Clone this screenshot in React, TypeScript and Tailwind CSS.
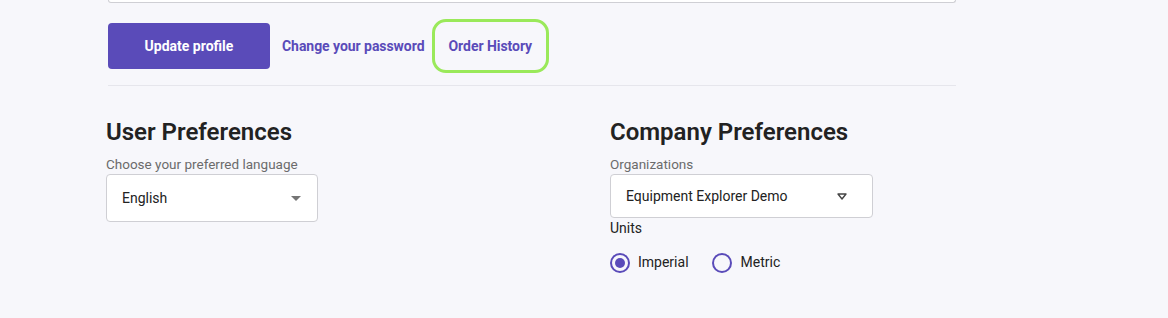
export default function App() {
  return (
    <div className="min-h-[318px] w-[1168px] bg-[#f7f7fb] font-['Roboto',sans-serif] text-[#222]">
      <div className="ml-[108px] w-[848px]">
        <div className="h-[3px] rounded-b-[4px] border border-t-0 border-[#cfcfd4] bg-white" />
        <div className="mt-[16px] flex items-center">
          <button className="h-[46px] w-[162px] rounded-[4px] bg-[#5a4bb9] text-[14px] font-bold text-white">
            Update profile
          </button>
          <a className="ml-[12px] text-[14px] font-bold tracking-[-0.05px] text-[#5a4bb9]">Change your password</a>
          <div className="ml-[7px] flex h-[54px] items-center rounded-[14px] border-[3px] border-[#9ae95a] px-[14px]">
            <a className="text-[14px] font-bold tracking-[-0.05px] text-[#5a4bb9]">Order History</a>
          </div>
        </div>
        <div className="mt-[12px] h-px bg-[#e6e6ec]" />
      </div>
      <div className="ml-[106px] mt-[30px] grid grid-cols-[504px_1fr]">
        <div>
          <h2 className="text-[24px] font-semibold leading-[32px] text-[#222]">User Preferences</h2>
          <div className="mt-[6px] text-[13.5px] leading-[20px] text-[#6b6b6b]">Choose your preferred language</div>
          <div className="flex h-[48px] w-[212px] items-center justify-between rounded-[4px] border border-[#cfcfd4] bg-white pl-[15px] pr-[16px]">
            <span className="text-[14px] text-[#222]">English</span>
            <svg width="10" height="5" viewBox="0 0 10 5">
              <path d="M0 0h10L5 5z" fill="#757575" />
            </svg>
          </div>
        </div>
        <div>
          <h2 className="text-[24px] font-semibold leading-[32px] text-[#222]">Company Preferences</h2>
          <div className="mt-[6px] text-[13.5px] leading-[20px] text-[#6b6b6b]">Organizations</div>
          <div className="flex h-[44px] w-[263px] items-center justify-between rounded-[4px] border border-[#cfcfd4] bg-white pl-[15px] pr-[25px]">
            <span className="text-[14px] text-[#222]">Equipment Explorer Demo</span>
            <svg width="10" height="7" viewBox="0 0 10 7">
              <path d="M1 1h8L5 6z" fill="none" stroke="#444" strokeWidth="1.4" strokeLinejoin="round" />
            </svg>
          </div>
          <div className="text-[14px] leading-[20px] text-[#222]">Units</div>
          <div className="mt-[14px] flex items-center">
            <label className="flex items-center">
              <span className="flex h-[20px] w-[20px] items-center justify-center rounded-full border-2 border-[#5a4bb9]">
                <span className="h-[10px] w-[10px] rounded-full bg-[#5a4bb9]" />
              </span>
              <span className="ml-[8px] text-[14px] text-[#222]">Imperial</span>
            </label>
            <label className="ml-[23px] flex items-center">
              <span className="h-[20px] w-[20px] rounded-full border-2 border-[#5a4bb9]" />
              <span className="ml-[9px] text-[14px] text-[#222]">Metric</span>
            </label>
          </div>
        </div>
      </div>
    </div>
  );
}
